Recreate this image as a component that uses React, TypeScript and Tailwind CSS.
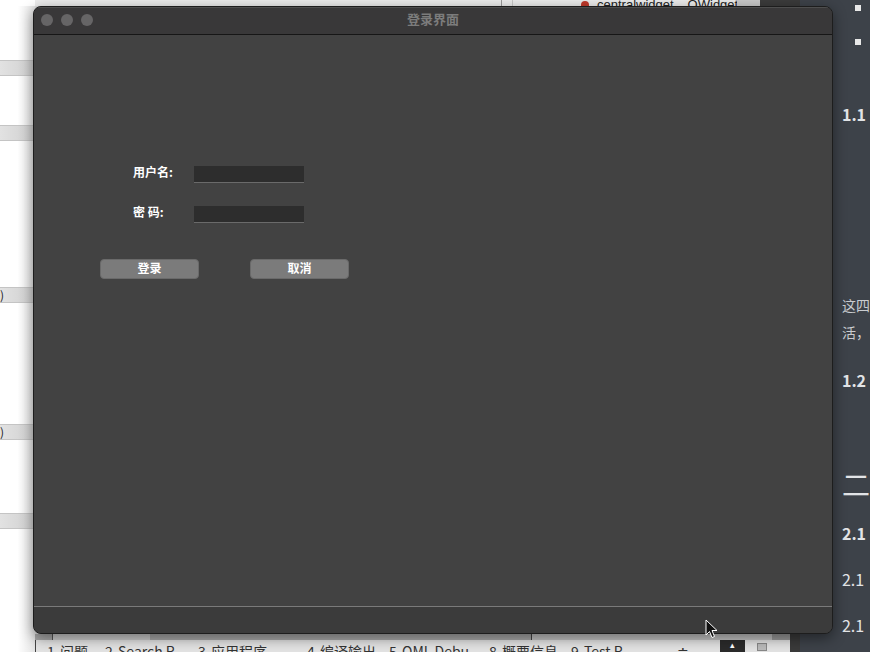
import React from "react";

const cjk = { fontFamily: '"Noto Sans CJK SC", "Noto Sans", sans-serif' };

function LeftStrip({ label }: { label?: string }) {
  return (
    <div className="h-[16px] bg-gradient-to-r from-[#e2e2e2] to-[#cfcfcf] border-y border-[#c4c4c4] text-[12px] leading-[14px] text-[#222] pl-[0px]">
      {label}
    </div>
  );
}

function Tab({ n, label, w }: { n: string; label: string; w: string }) {
  return (
    <div className={`${w} shrink-0 flex whitespace-nowrap`}>
      <span className="w-[13px]">{n}</span>
      <span>{label}</span>
    </div>
  );
}

export default function App() {
  return (
    <div className="relative w-[870px] h-[652px] overflow-hidden bg-[#e8e8e8]" style={cjk}>
      {/* background desktop / IDE */}
      <div className="flex h-full">
        {/* left column */}
        <div className="w-[35px] flex flex-col bg-gradient-to-r from-white via-white to-[#e4e4e4]">
          <div className="h-[6px] bg-white" />
          <div className="h-[54px]" />
          <LeftStrip />
          <div className="h-[49px]" />
          <LeftStrip />
          <div className="h-[146px]" />
          <LeftStrip label=")" />
          <div className="h-[121px]" />
          <LeftStrip label=")" />
          <div className="h-[73px]" />
          <LeftStrip />
          <div className="flex-1" />
        </div>
        {/* middle column */}
        <div className="w-[755px] flex flex-col">
          <div className="h-[6px] flex bg-[#ececec] overflow-hidden">
            <div className="w-[467px] border-r border-[#9a9a9a]" />
            <div className="w-[10px]" />
            <div className="w-[225px] flex items-end overflow-hidden border-l border-[#c8c8c8]">
              <div className="flex items-center gap-[8px] -mb-[6px] pl-[68px] text-[13px] leading-[14px] text-[#222] whitespace-nowrap" style={{ fontFamily: '"Liberation Sans", Arial, sans-serif' }}>
                <span className="w-[8px] h-[8px] rounded-full bg-[#c0392b]" />
                <span>centralwidget</span>
                <span className="ml-[6px]">QWidget</span>
              </div>
            </div>
            <div className="w-[23px] bg-[#c9c9c9]" />
            <div className="flex-1 bg-[#3b3b3b]" />
          </div>
          <div className="flex-1 bg-[#dcdcdc]" />
          <div className="h-[6px] flex bg-[#a9a9a9]">
            <div className="w-[17px]" />
            <div className="w-[98px] bg-[#cdcdcd] border-l border-[#555]" />
            <div className="w-[381px]" />
            <div className="w-[241px] bg-[#c4c4c4] border-l border-[#444]" />
            <div className="flex-1 bg-[#9a9a9a]" />
          </div>
          <div className="h-[12px] flex bg-[#e3e3e3] border-l border-[#444] overflow-hidden">
            <div className="flex items-start pt-[3px] pl-[11px] text-[14px] leading-[16px] text-[#333]">
              <Tab n="1" label="问题" w="w-[58px]" />
              <Tab n="2" label="Search R..." w="w-[93px]" />
              <Tab n="3" label="应用程序" w="w-[109px]" />
              <Tab n="4" label="编译输出" w="w-[82px]" />
              <Tab n="5" label="QML Debu..." w="w-[100px]" />
              <Tab n="8" label="概要信息" w="w-[82px]" />
              <Tab n="9" label="Test R..." w="w-[106px]" />
              <span className="w-[20px]">≑</span>
            </div>
            <div className="flex-1" />
            <div className="w-[25px] bg-[#2b2b2b] flex justify-center text-white text-[9px] leading-[10px]">▴</div>
            <div className="w-[12px]" />
            <div className="w-[10px] h-[8px] mt-[3px] border border-[#888] bg-[#bbb]" />
            <div className="w-[23px]" />
          </div>
        </div>
        {/* right column */}
        <div className="flex-1 flex">
          <div className="w-[10px] bg-[#3a3a3a]" />
          <div className="flex-1 bg-[#3d4249] flex flex-col pl-[42px] text-[#e2e4e7]">
            <div className="ml-[13px] mt-[5px] w-[6px] h-[6px] bg-[#e8e8e8]" />
            <div className="ml-[13px] mt-[28px] w-[6px] h-[6px] bg-[#e8e8e8]" />
            <div className="mt-[59px] h-[20px] leading-[20px] text-[16px] font-bold">1.1</div>
            <div className="mt-[171px] h-[20px] leading-[20px] text-[14px] text-[#c9ccd0] whitespace-nowrap">这四</div>
            <div className="mt-[7px] h-[20px] leading-[20px] text-[14px] text-[#c9ccd0] whitespace-nowrap">活，</div>
            <div className="mt-[28px] h-[20px] leading-[20px] text-[16px] font-bold">1.2</div>
            <div className="mt-[80px] h-[28px] leading-[28px] text-[28px] whitespace-nowrap">二</div>
            <div className="mt-[25px] h-[20px] leading-[20px] text-[16px] font-bold">2.1</div>
            <div className="mt-[26px] h-[20px] leading-[20px] text-[16px]">2.1</div>
            <div className="mt-[26px] h-[20px] leading-[20px] text-[16px]">2.1</div>
          </div>
        </div>
      </div>

      {/* window */}
      <div className="absolute left-[33px] top-[6px] w-[800px] h-[628px] rounded-[8px] overflow-hidden border border-[#1d1d1d] shadow-[0_4px_14px_rgba(0,0,0,0.45)] flex flex-col bg-[#424242]">
        <div className="h-[28px] shrink-0 bg-[#393839] border-b border-[#161616] relative flex items-center border-t border-t-[#4e4e4e]">
          <div className="flex gap-[8px] pl-[7px] -mt-[2px]">
            <span className="w-[12px] h-[12px] rounded-full bg-[#666566]" />
            <span className="w-[12px] h-[12px] rounded-full bg-[#666566]" />
            <span className="w-[12px] h-[12px] rounded-full bg-[#666566]" />
          </div>
          <div className="absolute inset-0 flex items-center justify-center pb-[4px] text-[13px] font-bold text-[#7c7c7c]">登录界面</div>
        </div>
        <div className="flex-1 flex flex-col pt-[131px]">
          <div className="flex items-start pl-[99px]">
            <div className="w-[61px] h-[17px] text-[12px] leading-[12px] font-bold text-white">用户名:</div>
            <div className="w-[110px] h-[17px] bg-[#2d2d2d] border-b border-[#6a6a6a]" />
          </div>
          <div className="flex items-start pl-[99px] mt-[23px]">
            <div className="w-[61px] h-[17px] text-[12px] leading-[12px] font-bold text-white">密&nbsp;码:</div>
            <div className="w-[110px] h-[17px] bg-[#2d2d2d] border-b border-[#6a6a6a]" />
          </div>
          <div className="flex pl-[66px] mt-[36px] gap-[51px]">
            <button className="w-[99px] h-[20px] rounded-[4px] bg-[#7b7b7b] border border-[#6a6a6a] text-white text-[12px] leading-[16px] pb-[2px] font-bold">登录</button>
            <button className="w-[99px] h-[20px] rounded-[4px] bg-[#7b7b7b] border border-[#6a6a6a] text-white text-[12px] leading-[16px] pb-[2px] font-bold">取消</button>
          </div>
        </div>
        <div className="h-[27px] shrink-0 bg-[#3b3b3b] border-t border-[#7a7a7a]" />
      </div>

      {/* mouse cursor */}
      <svg className="absolute left-[705px] top-[619px]" width="13" height="20" viewBox="0 0 13 20">
        <path d="M1 1 L1 16 L4.5 12.5 L7 18.5 L9.5 17.5 L7 11.5 L12 11.5 Z" fill="#111" stroke="#fff" strokeWidth="1" strokeLinejoin="round" />
      </svg>
    </div>
  );
}
